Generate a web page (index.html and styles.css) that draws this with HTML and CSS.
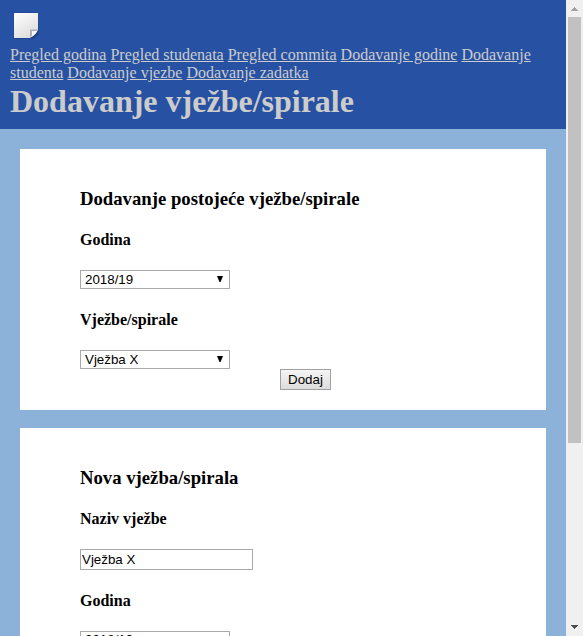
FILE: index.html
```html
<!DOCTYPE html>
<html lang="bs">
<head>
<meta charset="utf-8">
<title>Dodavanje vježbe/spirale</title>
<link rel="stylesheet" href="styles.css">
</head>
<body>
<div class="page">
  <header class="header">
    <svg class="logo" width="32" height="36" viewBox="0 0 32 36">
      <defs>
        <linearGradient id="paper" x1="0" y1="0" x2="0.6" y2="1"><stop offset="0" stop-color="#fff"/><stop offset="1" stop-color="#dedede"/></linearGradient>
      </defs>
      <path d="M3.500 2.500h25v18l-7 8.500h-18z" fill="#1d3f88" opacity="0.6"/>
      <path d="M21 28.500l7.500-8v3q-2 4-6 5.500z" fill="#18356f" opacity="0.6"/>
      <path d="M4 3h24v17l-8 8H4z" fill="url(#paper)"/>
      <path d="M20 28v-8.500h8z" fill="#b0b0b0"/>
      <path d="M21 27.500q1.500-2.500 1-6.500 3 .8 5.500-.5-1 3.500-6.500 7z" fill="#fff"/>
    </svg>
    <nav class="nav">
      <a href="#">Pregled godina</a>
      <a href="#">Pregled studenata</a>
      <a href="#">Pregled commita</a>
      <a href="#">Dodavanje godine</a>
      <a href="#">Dodavanje studenta</a>
      <a href="#">Dodavanje vjezbe</a>
      <a href="#">Dodavanje zadatka</a>
    </nav>
    <h1>Dodavanje vježbe/spirale</h1>
  </header>
  <main class="main">
    <form class="card">
      <h3>Dodavanje postojeće vježbe/spirale</h3>
      <h4>Godina</h4>
      <div class="select"><select><option>2018/19</option></select><svg class="arrow" width="6" height="6" viewBox="0 0 6 6"><path d="M0 0h6L3.500 6h-1z"/></svg></div>
      <h4>Vježbe/spirale</h4>
      <div class="select"><select><option>Vježba X</option></select><svg class="arrow" width="6" height="6" viewBox="0 0 6 6"><path d="M0 0h6L3.500 6h-1z"/></svg></div>
      <button type="button" class="submit">Dodaj</button>
    </form>
    <form class="card">
      <h3>Nova vježba/spirala</h3>
      <h4>Naziv vježbe</h4>
      <input class="field" type="text" value="Vježba X">
      <h4>Godina</h4>
      <div class="select year"><select><option>2018/19</option></select><svg class="arrow" width="6" height="6" viewBox="0 0 6 6"><path d="M0 0h6L3.500 6h-1z"/></svg></div>
    </form>
  </main>
</div>
<div class="scrollbar">
  <svg width="17" height="17" viewBox="0 0 17 17" shape-rendering="crispEdges"><path d="M8 7h1v1h1v1h1v1h1v1H5v-1h1V9h1V8h1z" fill="#a3a3a3"/></svg>
  <div class="thumb"></div>
  <svg class="down" width="17" height="17" viewBox="0 0 17 17" shape-rendering="crispEdges"><path d="M5 6h7v1h-1v1h-1v1H9v1H8V9H7V8H6V7H5z" fill="#505050"/></svg>
</div>
</body>
</html>
```
FILE: styles.css
```css
* { box-sizing: border-box; }
html, body { height: 100%; }
body {
  margin: 0;
  display: flex;
  height: 636px;
  overflow: hidden;
  font: 16px/18px "Liberation Serif", "Times New Roman", serif;
  color: #000;
  background: #8cb2da;
}
.page { width: 566px; height: 636px; overflow: hidden; }
.header {
  height: 129px;
  padding: 10px;
  background: #2751a3;
  color: #ccc;
}
.logo { display: block; }
.nav a { color: #ccc; text-decoration: underline; }
h1 { margin: 0; font-size: 32px; line-height: 39px; }
.main { padding: 20px; display: flex; flex-direction: column; gap: 18px; }
.card {
  display: flex;
  flex-direction: column;
  align-items: flex-start;
  padding: 39px 60px 20px;
  background: #fff;
}
h3 { margin: 0; font-size: 18.72px; line-height: 21px; }
h4 { margin: 22px 0 21px; font-size: 16px; line-height: 18px; }
h3 + h4 { margin-top: 22px; margin-bottom: 21px; }
.select { display: grid; width: 150px; height: 19px; }
.select select {
  grid-area: 1 / 1;
  appearance: none;
  width: 150px;
  height: 19px;
  margin: 0;
  padding: 0 4px;
  border: 1px solid #a9a9a9;
  border-radius: 0;
  background: #fff;
  color: #000;
  font: 13.333px/17px "Liberation Sans", Arial, sans-serif;
}
.year select { padding-bottom: 2px; line-height: 15px; }
.arrow {
  grid-area: 1 / 1;
  place-self: start end;
  margin: 6px 7px 0 0;
  pointer-events: none;
}
.submit {
  width: 51px;
  height: 21px;
  margin: 0 0 0 200px;
  padding: 0;
  border: 1px solid #a0a0a0;
  border-radius: 0;
  background: linear-gradient(#f5f5f5, #dcdcdc);
  color: #000;
  font: 13.333px/19px "Liberation Sans", Arial, sans-serif;
}
.field {
  width: 173px;
  height: 21px;
  padding: 1px;
  border: 1px solid #a9a9a9;
  background: #fff;
  color: #000;
  font: 13.333px/17px "Liberation Sans", Arial, sans-serif;
}
.scrollbar {
  display: flex;
  flex-direction: column;
  width: 17px;
  height: 636px;
  background: #f0f0f0;
}
.thumb { width: 13px; height: 426px; margin-left: 2px; background: #c1c1c1; }
.down { margin-top: auto; }
```
